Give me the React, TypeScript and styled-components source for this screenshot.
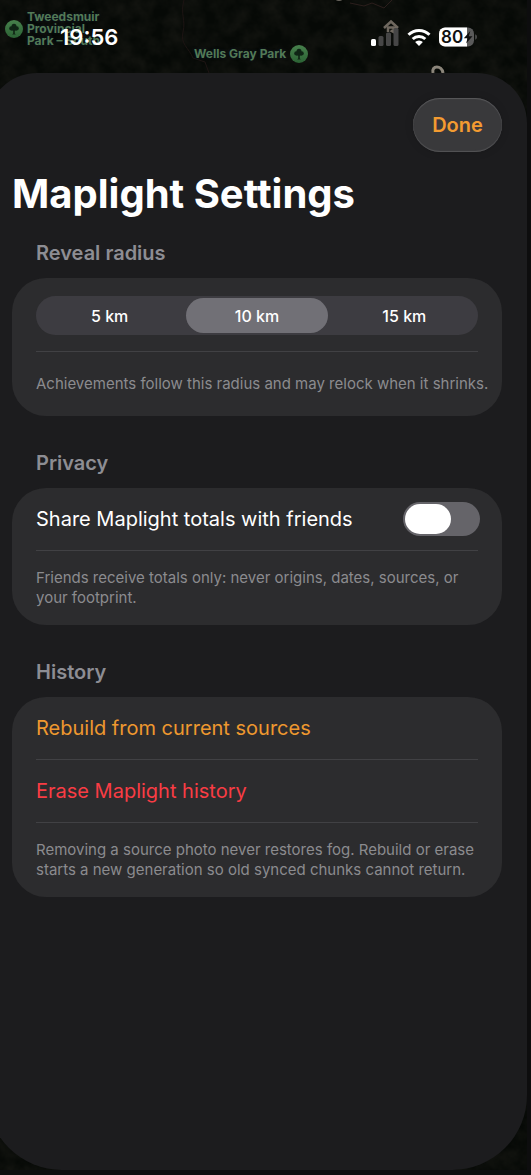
import React, { useState } from "react";
import styled, { createGlobalStyle } from "styled-components";

const GlobalStyle = createGlobalStyle`
  *, *::before, *::after { box-sizing: border-box; }
  html, body { margin: 0; background: #0d0d0e; }
  body {
    font-family: Inter, "Liberation Sans", sans-serif;
    color: #fff;
    -webkit-font-smoothing: antialiased;
  }
  button { font-family: inherit; border: 0; padding: 0; cursor: pointer; }
`;

const Screen = styled.div`
  position: relative;
  min-height: 100vh;
  display: flex;
  flex-direction: column;
  overflow: hidden;
  padding-bottom: 5px;
`;

const MapLayer = styled.div`
  position: absolute;
  inset: 0 4px 5px 0;
  background: #060906;
  overflow: hidden;
`;

const MapArt = styled.svg`
  position: absolute;
  top: 0;
  left: 0;
  width: 100%;
  height: 100%;
`;

const MapLabel = styled.div<{ $x: number; $y: number; $reverse?: boolean }>`
  position: absolute;
  left: ${(p) => p.$x}px;
  top: ${(p) => p.$y}px;
  display: flex;
  flex-direction: ${(p) => (p.$reverse ? "row-reverse" : "row")};
  align-items: center;
  gap: 4px;
  color: #537a56;
  font-size: 12px;
  line-height: 12px;
  font-weight: 700;
  white-space: nowrap;
  text-shadow: 0 0 3px #0a1428;
`;

const StatusBar = styled.header`
  position: relative;
  height: 73px;
  flex: none;
  display: flex;
  justify-content: space-between;
  align-items: center;
  padding: 0 53px 0 60px;
`;

const Time = styled.time`
  font-size: 22px;
  line-height: 24px;
  font-weight: 600;
`;

const StatusIcons = styled.div`
  display: flex;
  align-items: center;
  gap: 8px;
`;

const Sheet = styled.main`
  position: relative;
  flex: 1;
  margin: 0 4px 0 -13px;
  padding: 25px 25px 48px;
  background: #1c1c1e;
  border-radius: 50px 50px 75px 75px;
`;

const Toolbar = styled.div`
  display: flex;
  justify-content: flex-end;
`;

const DoneButton = styled.button`
  width: 89px;
  height: 54px;
  border-radius: 27px;
  background: #39393b;
  color: #f39b31;
  font-size: 20px;
  line-height: 24px;
  font-weight: 600;
  box-shadow: inset 0 1px 1px #5a5a5c, inset 0 -1px 1px #555557,
    0 0 8px rgba(0, 0, 0, 0.15);
`;

const Title = styled.h1`
  margin: 18px 0 23px;
  font-size: 40px;
  line-height: 48px;
  font-weight: 700;
`;

const Section = styled.section`
  & + & {
    margin-top: 35px;
  }
`;

const SectionTitle = styled.h2`
  margin: 0 0 13px 24px;
  font-size: 20px;
  line-height: 24px;
  font-weight: 600;
  color: #8d8d93;
`;

const Card = styled.div`
  background: #2c2c2e;
  border-radius: 34px;
  padding: 0 24px;
`;

const Row = styled.div`
  min-height: 63px;
  display: flex;
  align-items: center;
  justify-content: space-between;
  border-bottom: 1px solid #414144;
`;

const SegmentRow = styled(Row)`
  padding: 18px 0 16px;
`;

const Caption = styled.p`
  margin: 0 -12px 0 0;
  min-height: 64px;
  padding: 17px 0;
  display: flex;
  align-items: center;
  font-size: 15px;
  line-height: 20px;
  color: #8b8b8e;
`;

const Segments = styled.div`
  flex: 1;
  display: grid;
  grid-template-columns: repeat(3, 1fr);
  height: 39px;
  border-radius: 20px;
  background: #3d3c41;
`;

const Segment = styled.label`
  position: relative;
  display: flex;
  padding: 2px 3px;
  font-size: 16px;
  line-height: 20px;
  font-weight: 500;
  cursor: pointer;
`;

const HiddenRadio = styled.input`
  position: absolute;
  opacity: 0;
  margin: 0;
  inset: 0;
`;

const SegmentPill = styled.span<{ $active: boolean }>`
  flex: 1;
  display: flex;
  align-items: center;
  justify-content: center;
  border-radius: 18px;
  background: ${(p) => (p.$active ? "#717076" : "transparent")};
`;

const RowLabel = styled.label`
  font-size: 20px;
  line-height: 24px;
`;

const Switch = styled.input`
  appearance: none;
  margin: 0 -2px 0 0;
  width: 77px;
  height: 34px;
  flex: none;
  border-radius: 17px;
  background: #656469;
  padding: 2px;
  display: flex;
  cursor: pointer;

  &::before {
    content: "";
    width: 46px;
    height: 30px;
    border-radius: 15px;
    background: #fff;
  }

  &:checked {
    background: #f39b31;
    justify-content: flex-end;
  }
`;

const ActionButton = styled.button<{ $danger?: boolean }>`
  flex: 1;
  text-align: left;
  background: none;
  font-size: 20px;
  line-height: 24px;
  color: ${(p) => (p.$danger ? "#f93c44" : "#ee982f")};
`;

const ParkPin = () => (
  <svg width="18" height="18" viewBox="0 0 18 18" aria-hidden="true">
    <defs>
      <linearGradient id="pin" x1="0" y1="0" x2="0" y2="1">
        <stop offset="0" stopColor="#47804c" />
        <stop offset="1" stopColor="#2b6234" />
      </linearGradient>
    </defs>
    <circle cx="9" cy="9" r="9" fill="url(#pin)" />
    <g fill="#0f2415">
      <circle cx="9" cy="6.300" r="2.500" />
      <circle cx="6.300" cy="8.400" r="2.100" />
      <circle cx="11.700" cy="8.400" r="2.100" />
      <path d="M6 8h6v2.300l-2.200.4v2.900l1 .9H7.200l1-.9v-2.900L6 10.300z" />
    </g>
  </svg>
);

const Signal = () => (
  <svg width="28" height="20" viewBox="0 0 28 20" aria-label="Signal">
    <rect x="0" y="12" width="5" height="7" rx="1.500" fill="#fff" />
    <rect x="7.500" y="9" width="5" height="10" rx="1.500" fill="#464646" />
    <rect x="15" y="5.500" width="5" height="13.500" rx="1.500" fill="#464646" />
    <rect x="22.500" y="1" width="5" height="18" rx="1.500" fill="#464646" />
  </svg>
);

const Wifi = () => (
  <svg width="24" height="18" viewBox="0 0 24 18" aria-label="Wi-Fi">
    <g fill="none" stroke="#fff" strokeWidth="3">
      <path d="M1.500 6.700a15 15 0 0 1 21 0" />
      <path d="M5.700 11a9 9 0 0 1 12.600 0" />
    </g>
    <path d="M12 18l-3.900-3.900a5.600 5.600 0 0 1 7.800 0z" fill="#fff" />
  </svg>
);

const Battery = () => (
  <svg width="39" height="20" viewBox="0 0 39 20" aria-label="Battery 80%">
    <defs>
      <clipPath id="shell">
        <rect width="35" height="19" y="0.500" rx="6" />
      </clipPath>
    </defs>
    <g clipPath="url(#shell)">
      <rect width="35" height="20" fill="#5a5a5a" />
      <rect width="28" height="20" fill="#fff" />
    </g>
    <path d="M36.300 7.300c2 .6 2 4.800 0 5.400z" fill="#5a5a5a" />
    <text x="2" y="16" fontSize="17" fontWeight="600" fill="#101010">
      80
    </text>
    <path d="M31.300 4l-6.500 7.200h3.700l-1.400 5.300 6.400-7.300h-3.700z" fill="#101010" />
  </svg>
);

const MapBackdrop = () => (
  <MapArt aria-hidden="true">
    <defs>
      <filter
        id="terrain"
        x="0"
        y="0"
        width="100%"
        height="100%"
        colorInterpolationFilters="sRGB"
      >
        <feTurbulence type="fractalNoise" baseFrequency="0.060" numOctaves="4" seed="7" />
        <feColorMatrix values="0 0 0 0 0.11  0 0 0 0 0.11  0 0 0 0 0.09  1 0 0 0 -0.300" />
      </filter>
    </defs>
    <rect width="100%" height="100%" filter="url(#terrain)" />
    <path d="M184 0c-4 14 2 20-1 32s6 16 10 26l12 4 4 11" fill="none" stroke="#1d1413" />
    <path d="M350 3l14 3 8-3 12 5 8-8" fill="none" stroke="#2b1e1c" />
    <circle cx="339" cy="-5" r="6" fill="#6b675f" />
    <g fill="none" stroke="#6f685f" strokeWidth="2.500">
      <path d="M384 28l7-6.500 7 6.500" />
      <path d="M388 32v-4.500h5.500v4.500l-3-1.500M396 27v7" />
    </g>
    <path d="M433 73c-2-8 9-8 10 0" fill="none" stroke="#8b857a" strokeWidth="3" />
  </MapArt>
);

const RADII = [5, 10, 15];

export default function App() {
  const [radius, setRadius] = useState(10);
  const [share, setShare] = useState(false);

  return (
    <Screen>
      <GlobalStyle />
      <MapLayer>
        <MapBackdrop />
        <MapLabel $x={5} $y={11}>
          <ParkPin />
          <span>
            Tweedsmuir
            <br />
            Provincial
            <br />
            Park – South
          </span>
        </MapLabel>
        <MapLabel $x={194} $y={45} $reverse>
          <ParkPin />
          <span>Wells Gray Park</span>
        </MapLabel>
      </MapLayer>

      <StatusBar>
        <Time>19:56</Time>
        <StatusIcons>
          <Signal />
          <Wifi />
          <Battery />
        </StatusIcons>
      </StatusBar>

      <Sheet>
        <Toolbar>
          <DoneButton type="button">Done</DoneButton>
        </Toolbar>
        <Title>Maplight Settings</Title>

        <Section>
          <SectionTitle id="radius-title">Reveal radius</SectionTitle>
          <Card>
            <SegmentRow>
              <Segments role="radiogroup" aria-labelledby="radius-title">
                {RADII.map((km) => (
                  <Segment key={km}>
                    <HiddenRadio
                      type="radio"
                      name="radius"
                      value={km}
                      checked={radius === km}
                      onChange={() => setRadius(km)}
                    />
                    <SegmentPill $active={radius === km}>{km} km</SegmentPill>
                  </Segment>
                ))}
              </Segments>
            </SegmentRow>
            <Caption>Achievements follow this radius and may relock when it shrinks.</Caption>
          </Card>
        </Section>

        <Section>
          <SectionTitle>Privacy</SectionTitle>
          <Card>
            <Row>
              <RowLabel htmlFor="share">Share Maplight totals with friends</RowLabel>
              <Switch
                id="share"
                type="checkbox"
                role="switch"
                checked={share}
                onChange={(e) => setShare(e.target.checked)}
              />
            </Row>
            <Caption>
              Friends receive totals only: never origins, dates, sources, or your footprint.
            </Caption>
          </Card>
        </Section>

        <Section>
          <SectionTitle>History</SectionTitle>
          <Card>
            <Row>
              <ActionButton type="button">Rebuild from current sources</ActionButton>
            </Row>
            <Row>
              <ActionButton type="button" $danger>
                Erase Maplight history
              </ActionButton>
            </Row>
            <Caption>
              Removing a source photo never restores fog. Rebuild or erase starts a new generation
              so old synced chunks cannot return.
            </Caption>
          </Card>
        </Section>
      </Sheet>
    </Screen>
  );
}
